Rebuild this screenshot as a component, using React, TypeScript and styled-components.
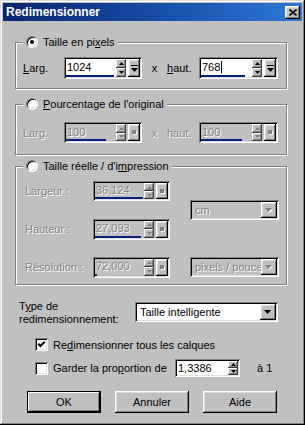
import React from "react";
import styled, { createGlobalStyle, css } from "styled-components";

const GlobalStyle = createGlobalStyle`
  html, body {
    margin: 0;
    padding: 0;
    background: #c0c0c0;
  }
  body {
    font-family: "Liberation Sans", Arial, sans-serif;
    font-size: 11px;
    color: #000;
  }
`;

const raised = css`
  box-shadow: inset -1px -1px 0 #000, inset 1px 1px 0 #fff,
    inset -2px -2px 0 #808080, inset 2px 2px 0 #dfdfdf;
`;

const raisedThin = css`
  box-shadow: inset -1px -1px 0 #404040, inset 1px 1px 0 #fff,
    inset -2px -2px 0 #808080;
`;

const sunken = css`
  box-shadow: inset 1px 1px 0 #808080, inset -1px -1px 0 #fff,
    inset 2px 2px 0 #000, inset -2px -2px 0 #dfdfdf;
`;

const Window = styled.div`
  width: 305px;
  height: 425px;
  box-sizing: border-box;
  padding: 3px;
  background: #c0c0c0;
  box-shadow: inset -1px -1px 0 #000, inset 1px 1px 0 #dfdfdf,
    inset -2px -2px 0 #808080, inset 2px 2px 0 #fff;
  display: flex;
  flex-direction: column;
`;

const TitleBar = styled.div`
  height: 18px;
  flex-shrink: 0;
  display: flex;
  align-items: center;
  justify-content: space-between;
  padding: 0 2px 0 3px;
  background: linear-gradient(to right, #0a2470 0%, #14479f 45%, #2f78d6 100%);
  color: #fff;
  font-weight: bold;
  font-size: 12px;
`;

const CloseButton = styled.div`
  width: 15px;
  height: 13px;
  box-sizing: border-box;
  background: #c0c0c0;
  ${raised};
  display: flex;
  align-items: center;
  justify-content: center;
`;

const Body = styled.div`
  display: flex;
  flex-direction: column;
  padding: 0 0 0 12px;
`;

const Group = styled.fieldset<{ $top: number; $pt: number; $pb: number }>`
  width: 272px;
  box-sizing: border-box;
  margin: ${(p) => p.$top}px 0 0 0;
  padding: ${(p) => p.$pt}px 8px ${(p) => p.$pb}px 7px;
  border: 1px solid #808080;
  box-shadow: 1px 1px 0 #fff, inset 1px 1px 0 #fff;
  min-width: 0;
`;

const Legend = styled.legend`
  height: 14px;
  padding: 0 3px;
  display: flex;
  align-items: center;
  gap: 5px;
  background: #c0c0c0;
  line-height: 14px;
`;

const Radio = styled.span<{ $checked?: boolean }>`
  position: relative;
  width: 12px;
  height: 12px;
  box-sizing: border-box;
  border-radius: 50%;
  background: #fff;
  border: 1px solid;
  border-color: #808080 #fff #fff #808080;
  box-shadow: inset 1px 1px 0 #000, inset -1px -1px 0 #dfdfdf;
  &::after {
    content: "";
    display: ${(p) => (p.$checked ? "block" : "none")};
    position: absolute;
    left: 3px;
    top: 3px;
    width: 4px;
    height: 4px;
    border-radius: 50%;
    background: #000;
  }
`;

const Text = styled.span<{ $disabled?: boolean }>`
  white-space: nowrap;
  color: ${(p) => (p.$disabled ? "#858585" : "#000")};
  text-shadow: ${(p) => (p.$disabled ? "1px 1px 0 #fff" : "none")};
`;

const FieldRow = styled.div`
  display: flex;
  align-items: center;
`;

const FieldLabel = styled(Text)<{ $w: number; $center?: boolean }>`
  width: ${(p) => p.$w}px;
  flex-shrink: 0;
  text-align: ${(p) => (p.$center ? "center" : "left")};
`;

const SizeGrid = styled.div`
  display: grid;
  grid-template-columns: 70px 95px 89px;
  grid-template-rows: 20px 20px 20px;
  row-gap: 18px;
  align-items: center;
  padding-left: 2px;
`;

const Cell = styled.div<{ $row: string; $col: number }>`
  grid-row: ${(p) => p.$row};
  grid-column: ${(p) => p.$col};
  margin-left: ${(p) => (p.$col === 2 ? -2 : 0)}px;
`;

const SpinFrame = styled.div<{ $w: number; $h: number; $disabled?: boolean }>`
  width: ${(p) => p.$w}px;
  height: ${(p) => p.$h}px;
  box-sizing: border-box;
  padding: 2px;
  flex-shrink: 0;
  background: ${(p) => (p.$disabled ? "#c0c0c0" : "#fff")};
  ${sunken};
  display: flex;
`;

const EditArea = styled.div`
  flex: 1;
  display: flex;
  flex-direction: column;
  min-width: 0;
`;

const EditText = styled(Text)`
  flex: 1;
  display: flex;
  align-items: center;
  padding-left: 1px;
`;

const Caret = styled.span`
  width: 1px;
  height: 12px;
  background: #000;
  margin-left: 1px;
`;

const FillTrack = styled.div`
  height: 2px;
  display: flex;
`;

const FillBar = styled.div`
  height: 2px;
  background: #0a1f78;
`;

const SpinColumn = styled.div`
  width: 10px;
  display: flex;
  flex-direction: column;
`;

const SpinButton = styled.div`
  flex: 1;
  background: #c0c0c0;
  ${raisedThin};
  display: flex;
  align-items: center;
  justify-content: center;
`;

const PopButton = styled.div`
  width: 12px;
  margin-left: 2px;
  background: #c0c0c0;
  ${raised};
  display: flex;
  align-items: center;
  justify-content: center;
`;

const Combo = styled.div<{ $w: number; $disabled?: boolean }>`
  width: ${(p) => p.$w}px;
  height: 20px;
  box-sizing: border-box;
  padding: 2px;
  background: ${(p) => (p.$disabled ? "#c0c0c0" : "#fff")};
  ${sunken};
  display: flex;
`;

const ComboText = styled(Text)`
  flex: 1;
  display: flex;
  align-items: center;
  padding-left: 3px;
  overflow: hidden;
`;

const ComboButton = styled.div`
  width: 16px;
  background: #c0c0c0;
  ${raised};
  display: flex;
  align-items: center;
  justify-content: center;
`;

const TypeRow = styled.div`
  display: flex;
  align-items: flex-start;
  margin-top: 17px;
  padding-left: 4px;
`;

const TypeLabel = styled.div`
  width: 116px;
  line-height: 13px;
  margin-top: -2px;
`;

const CheckRow = styled.div<{ $top: number }>`
  display: flex;
  align-items: center;
  margin-top: ${(p) => p.$top}px;
  padding-left: 20px;
`;

const CheckBox = styled.span`
  width: 13px;
  height: 13px;
  box-sizing: border-box;
  flex-shrink: 0;
  background: #fff;
  ${sunken};
  display: flex;
  align-items: center;
  justify-content: center;
  margin-right: 5px;
`;

const ButtonRow = styled.div`
  display: flex;
  gap: 14px;
  margin-top: 14px;
  padding-left: 12px;
`;

const Button = styled.div<{ $default?: boolean }>`
  width: 74px;
  height: 22px;
  box-sizing: border-box;
  display: flex;
  align-items: center;
  justify-content: center;
  background: #c0c0c0;
  ${(p) =>
    p.$default
      ? css`
          box-shadow: inset 0 0 0 1px #000, inset -2px -2px 0 #000,
            inset 2px 2px 0 #fff, inset -3px -3px 0 #808080;
        `
      : raised};
`;

const U = styled.span`
  text-decoration: underline;
`;

const Arrow = ({ dir, color = "#000" }: { dir: "up" | "down"; color?: string }) => (
  <svg width="5" height="3" viewBox="0 0 5 3">
    <polygon points={dir === "up" ? "2.5,0 5,3 0,3" : "0,0 5,0 2.5,3"} fill={color} />
  </svg>
);

const PopGlyph = ({ disabled }: { disabled?: boolean }) =>
  disabled ? (
    <svg width="5" height="5" viewBox="0 0 5 5">
      <rect x="0" y="0" width="4" height="4" fill="#808080" />
      <rect x="1" y="4" width="4" height="1" fill="#fff" />
      <rect x="4" y="1" width="1" height="4" fill="#fff" />
    </svg>
  ) : (
    <svg width="7" height="7" viewBox="0 0 7 7">
      <rect x="0" y="0" width="7" height="1" fill="#000" />
      <polygon points="0,3 7,3 3.5,7" fill="#000" />
    </svg>
  );

const DropGlyph = ({ disabled }: { disabled?: boolean }) => (
  <svg width="8" height="5" viewBox="0 0 8 5">
    {disabled && <polygon points="1,1 8,1 4.5,5" fill="#fff" />}
    <polygon points="0,0 7,0 3.5,4" fill={disabled ? "#808080" : "#000"} />
  </svg>
);

interface SpinProps {
  value: string;
  w: number;
  h: number;
  fill?: number;
  disabled?: boolean;
  caret?: boolean;
  popup?: boolean;
}

const SpinEdit: React.FC<SpinProps> = ({ value, w, h, fill, disabled, caret, popup = true }) => (
  <SpinFrame $w={w} $h={h} $disabled={disabled}>
    <EditArea>
      <EditText $disabled={disabled}>
        {value}
        {caret && <Caret />}
      </EditText>
      {fill !== undefined && (
        <FillTrack>
          <FillBar style={{ width: `${Math.round(fill * 100)}%` }} />
        </FillTrack>
      )}
    </EditArea>
    <SpinColumn>
      <SpinButton>
        <Arrow dir="up" color={disabled ? "#808080" : "#000"} />
      </SpinButton>
      <SpinButton>
        <Arrow dir="down" color={disabled ? "#808080" : "#000"} />
      </SpinButton>
    </SpinColumn>
    {popup && (
      <PopButton>
        <PopGlyph disabled={disabled} />
      </PopButton>
    )}
  </SpinFrame>
);

const Select: React.FC<{ value: string; w: number; disabled?: boolean }> = ({ value, w, disabled }) => (
  <Combo $w={w} $disabled={disabled}>
    <ComboText $disabled={disabled}>{value}</ComboText>
    <ComboButton>
      <DropGlyph disabled={disabled} />
    </ComboButton>
  </Combo>
);

const App: React.FC = () => (
  <>
    <GlobalStyle />
    <Window>
      <TitleBar>
        <span>Redimensionner</span>
        <CloseButton>
          <svg width="8" height="7" viewBox="0 0 8 7">
            <path d="M0.5 0.5 L7.5 6.5 M7.5 0.5 L0.5 6.5" stroke="#000" strokeWidth="1.6" />
          </svg>
        </CloseButton>
      </TitleBar>
      <Body>
        <Group $top={14} $pt={8} $pb={9}>
          <Legend>
            <Radio $checked />
            <Text>
              Taille en pi<U>x</U>els
            </Text>
          </Legend>
          <FieldRow>
            <FieldLabel $w={41}>
              <U>L</U>arg.
            </FieldLabel>
            <SpinEdit value="1024" w={78} h={22} fill={0.96} />
            <FieldLabel $w={25} $center>
              x
            </FieldLabel>
            <FieldLabel $w={32}>
              <U>h</U>aut.
            </FieldLabel>
            <SpinEdit value="768" w={79} h={22} fill={0.86} caret />
          </FieldRow>
        </Group>

        <Group $top={8} $pt={11} $pb={11}>
          <Legend>
            <Radio />
            <Text>
              <U>P</U>ourcentage de l'original
            </Text>
          </Legend>
          <FieldRow>
            <FieldLabel $w={41} $disabled>
              Larg.
            </FieldLabel>
            <SpinEdit value="100" w={78} h={21} fill={0.8} disabled />
            <FieldLabel $w={25} $center $disabled>
              x
            </FieldLabel>
            <FieldLabel $w={32} $disabled>
              haut.
            </FieldLabel>
            <SpinEdit value="100" w={79} h={21} fill={0.8} disabled />
          </FieldRow>
        </Group>

        <Group $top={4} $pt={8} $pb={7}>
          <Legend>
            <Radio />
            <Text>
              Taille réelle / d'i<U>m</U>pression
            </Text>
          </Legend>
          <SizeGrid>
            <Cell $row="1" $col={1}>
              <FieldLabel $w={68} $disabled>
                Largeur :
              </FieldLabel>
            </Cell>
            <Cell $row="1" $col={2}>
              <SpinEdit value="36,124" w={77} h={20} fill={0.98} disabled />
            </Cell>
            <Cell $row="1 / 3" $col={3}>
              <Select value="cm" w={89} disabled />
            </Cell>
            <Cell $row="2" $col={1}>
              <FieldLabel $w={68} $disabled>
                Hauteur :
              </FieldLabel>
            </Cell>
            <Cell $row="2" $col={2}>
              <SpinEdit value="27,093" w={77} h={21} fill={0.94} disabled />
            </Cell>
            <Cell $row="3" $col={1}>
              <FieldLabel $w={68} $disabled>
                Résolution :
              </FieldLabel>
            </Cell>
            <Cell $row="3" $col={2}>
              <SpinEdit value="72,000" w={77} h={21} fill={0.05} disabled />
            </Cell>
            <Cell $row="3" $col={3}>
              <Select value="pixels / pouce" w={89} disabled />
            </Cell>
          </SizeGrid>
        </Group>

        <TypeRow>
          <TypeLabel>
            T<U>y</U>pe de
            <br />
            redimensionnement:
          </TypeLabel>
          <Select value="Taille intelligente" w={143} />
        </TypeRow>

        <CheckRow $top={12}>
          <CheckBox>
            <svg width="9" height="9" viewBox="0 0 9 9">
              <path d="M1.2 3.8 L3.4 6 L7.8 1.6" stroke="#000" strokeWidth="2" fill="none" />
            </svg>
          </CheckBox>
          <Text>
            Re<U>d</U>imensionner tous les calques
          </Text>
        </CheckRow>

        <CheckRow $top={8}>
          <CheckBox />
          <FieldLabel $w={122}>
            Garder la pro<U>p</U>ortion de
          </FieldLabel>
          <SpinEdit value="1,3386" w={65} h={18} popup={false} />
          <Text style={{ marginLeft: 17 }}>à 1</Text>
        </CheckRow>

        <ButtonRow>
          <Button $default>OK</Button>
          <Button>Annuler</Button>
          <Button>Aide</Button>
        </ButtonRow>
      </Body>
    </Window>
  </>
);

export default App;
